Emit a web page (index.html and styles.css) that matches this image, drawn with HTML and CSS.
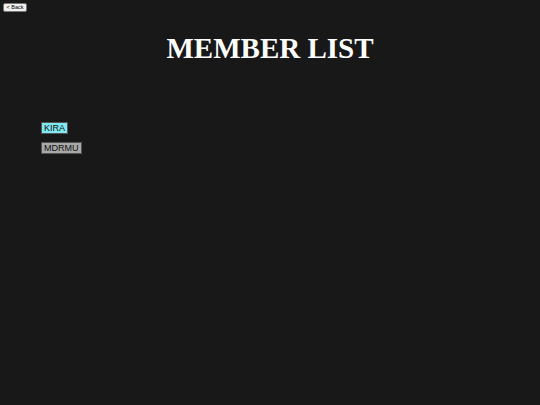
FILE: index.html
```html
<!DOCTYPE html>
<html>
<head>
<meta charset="utf-8">
<link rel="stylesheet" href="styles.css">
</head>
<body>
<button class="back">&lt; Back</button>
<h1 class="title">MEMBER LIST</h1>
<ul class="members">
  <li class="row"><span class="member kira">KIRA</span></li>
  <li class="row"><span class="member mdrmu">MDRMU</span></li>
</ul>
</body>
</html>
```
FILE: styles.css
```css
html, body {
  margin: 0;
  padding: 0;
  background: #181818;
  height: 100%;
}
body {
  padding: 3px;
  box-sizing: border-box;
}
.back {
  display: block;
  font-family: "Liberation Sans", Arial, sans-serif;
  font-size: 5.5px;
  height: 9px;
  width: 24px;
  padding: 0;
  background: #efefef;
  color: #000;
  border: 1px solid #767676;
  border-radius: 2px;
  line-height: 7px;
}
.title {
  font-family: "Liberation Serif", "Times New Roman", serif;
  font-weight: bold;
  font-size: 29px;
  color: #fff;
  text-align: center;
  margin: 19px 0 0 0;
  line-height: 34px;
}
.members {
  list-style: none;
  margin: 57px 0 0 38px;
  padding: 0;
  display: flex;
  flex-direction: column;
  align-items: flex-start;
  gap: 8px;
}
.row {
  display: flex;
}
.member {
  display: block;
  font-family: "Liberation Sans", Arial, sans-serif;
  font-size: 9px;
  line-height: 10px;
  padding: 0 2px;
  border: 1px solid #555;
  color: #111;
}
.member.kira { background: #80e8f0; }
.member.mdrmu { background: #a8a8a8; }
```
